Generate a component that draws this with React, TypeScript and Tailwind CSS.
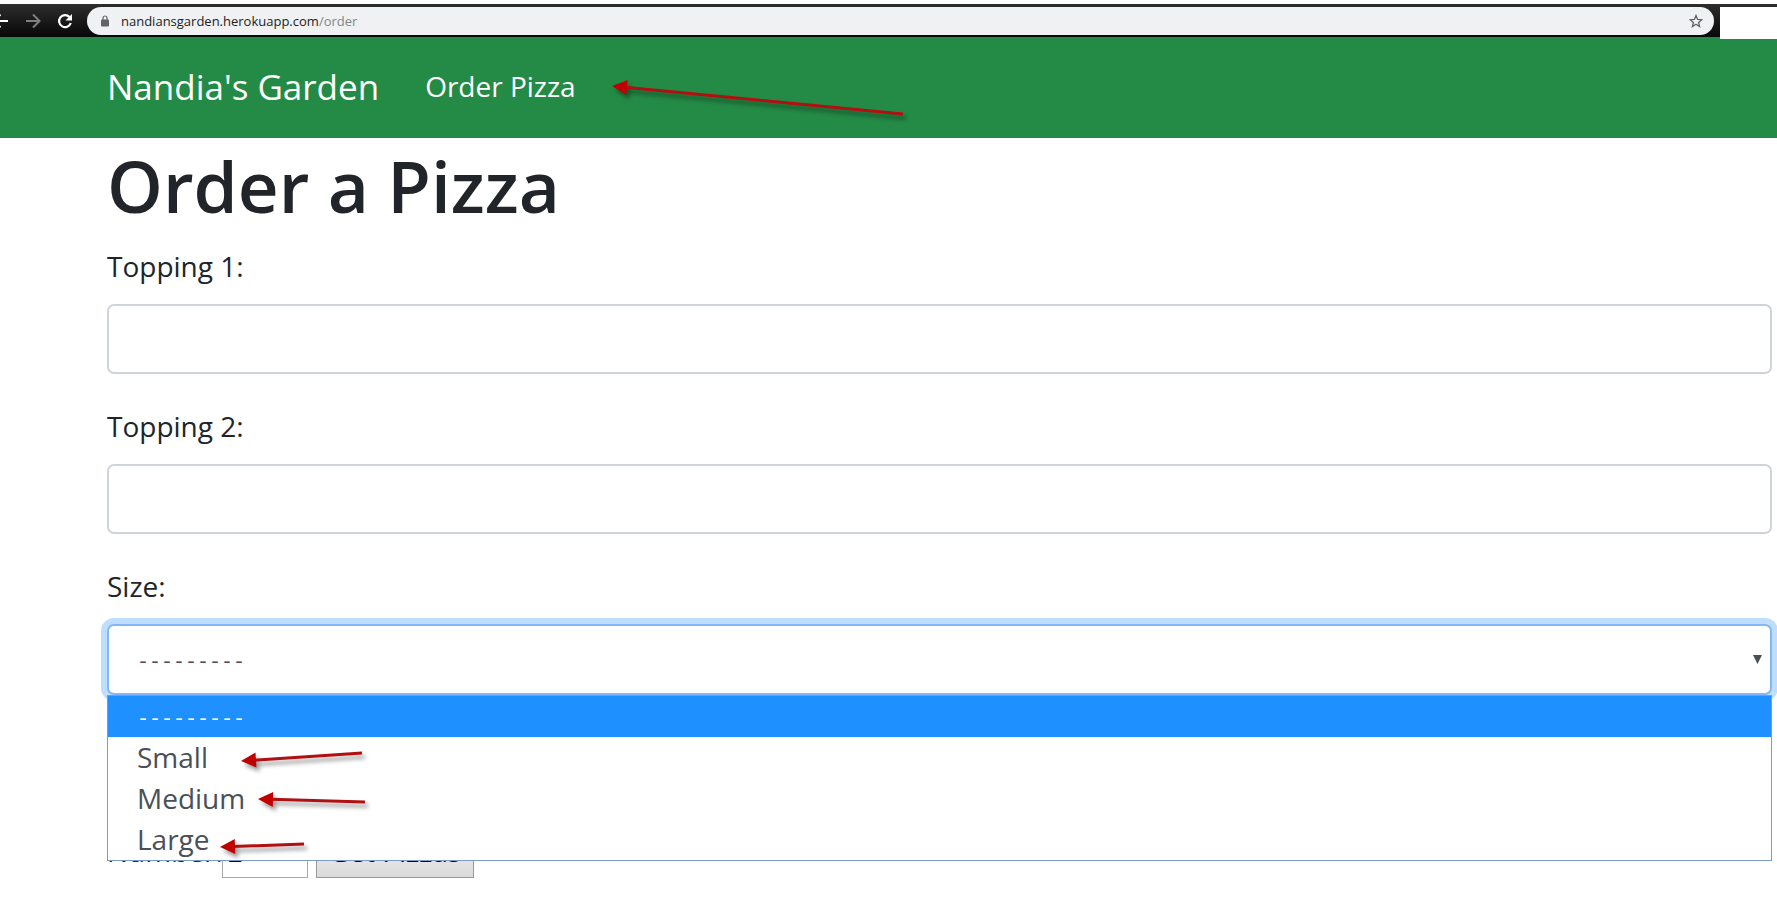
import React from "react";

type ArrowProps = { x1: number; y1: number; x2: number; y2: number };

function Arrow({ x1, y1, x2, y2 }: ArrowProps) {
  const angle = (Math.atan2(y2 - y1, x2 - x1) * 180) / Math.PI;
  const length = Math.hypot(x2 - x1, y2 - y1);
  return (
    <g transform={`translate(${x1} ${y1}) rotate(${angle})`}>
      <path d={`M13 0H${length}`} stroke="#b01010" strokeWidth="3" />
      <path d="M0 0L15 -7.5V7.5Z" fill="#c00000" />
    </g>
  );
}

function Annotations() {
  return (
    <svg
      className="pointer-events-none absolute top-0 left-0 z-20 h-[903px] w-[1000px] drop-shadow-[3px_4px_2px_rgba(0,0,0,0.4)]"
      viewBox="0 0 1000 903"
      aria-hidden="true"
    >
      <Arrow x1={612} y1={86} x2={903} y2={114} />
      <Arrow x1={241} y1={761} x2={362} y2={753} />
      <Arrow x1={258} y1={799} x2={365} y2={802} />
      <Arrow x1={220} y1={847} x2={304} y2={844} />
    </svg>
  );
}

function BrowserBar() {
  return (
    <div className="mt-1 flex h-[33px] bg-linear-to-b from-[#2e2e2e] to-[#080808]">
      <div className="flex min-w-0 flex-1 items-center pt-[3px] pr-[6px] pb-[2px]">
        <div className="flex w-[87px] shrink-0 items-center">
          <button aria-label="Back" className="-ml-2 w-4">
            <svg viewBox="0 0 16 16" className="h-4 w-4" fill="none" stroke="#fff" strokeWidth="2">
              <path d="M16 8H3M8.500 1.500L2 8l6.500 6.500" />
            </svg>
          </button>
          <button aria-label="Forward" className="ml-[17px] w-4">
            <svg viewBox="0 0 16 16" className="h-4 w-4" fill="none" stroke="#808080" strokeWidth="2">
              <path d="M1 8h13M8 1.500L14.500 8 8 14.500" />
            </svg>
          </button>
          <button aria-label="Reload" className="ml-4 w-4">
            <svg viewBox="0 0 16 16" className="h-4 w-4" fill="none" stroke="#fff" strokeWidth="2.200">
              <path d="M13.800 10A6 6 0 1 1 12.500 4" />
              <path d="M15 1v6.500H8.500Z" fill="#fff" stroke="none" />
            </svg>
          </button>
        </div>
        <div className="flex h-7 min-w-0 flex-1 items-center rounded-full bg-[#f0f1f3] pr-[11px] pl-[14px]">
          <svg viewBox="0 0 8 12" className="mr-3 h-3 w-2" aria-hidden="true">
            <rect y="4.500" width="8" height="7" rx="1" fill="#5f6368" />
            <path d="M2 5V3a2 2 0 0 1 4 0v2" fill="none" stroke="#5f6368" strokeWidth="1.200" />
          </svg>
          <span className="flex-1 text-[13px] leading-5 text-[#202124]">
            nandiansgarden.herokuapp.com<span className="text-[#80868b]">/order</span>
          </span>
          <button aria-label="Bookmark this page">
            <svg viewBox="0 0 14 14" className="h-[14px] w-[14px]" fill="none" stroke="#5f6368" strokeWidth="1.300">
              <path d="M7 1.500l1.600 3.900 4.200.3-3.200 2.700 1 4.100L7 10.300l-3.600 2.200 1-4.100L1.200 5.700l4.200-.3Z" />
            </svg>
          </button>
        </div>
      </div>
      <div className="mt-[3px] h-8 w-[57px] shrink-0 bg-white" />
    </div>
  );
}

function TextField({ id, label }: { id: string; label: string }) {
  return (
    <div className="mb-[30px]">
      <label htmlFor={id} className="mb-[15px] block text-[28px] leading-[45px]">
        {label}
      </label>
      <input
        id={id}
        type="text"
        className="block h-[70px] w-full rounded-[7px] border-2 border-[#ced4da] bg-white px-7 text-[28px] text-[#495057] outline-none"
      />
    </div>
  );
}

const placeholder = "---------";
const sizes = ["Small", "Medium", "Large"];

export default function App() {
  return (
    <div className="relative min-h-screen overflow-hidden bg-white font-['Open_Sans','Noto_Sans',sans-serif] text-[#212529]">
      <BrowserBar />
      <nav className="flex h-[101px] items-center bg-[#248b46] pb-[2px] pl-[107px] text-white">
        <a href="#home" className="mr-[46px] text-[35px] leading-[56px]">
          Nandia's Garden
        </a>
        <a href="#order" className="text-[28px] leading-[45px]">
          Order Pizza
        </a>
      </nav>
      <main className="pr-[5px] pl-[107px]">
        <h1 className="mb-[10px] text-[71px] leading-[96px] font-semibold">Order a Pizza</h1>
        <form>
          <TextField id="topping1" label="Topping 1:" />
          <TextField id="topping2" label="Topping 2:" />
          <div className="relative mb-[134px]">
            <label htmlFor="size" className="mb-[15px] block text-[28px] leading-[45px]">
              Size:
            </label>
            <div className="relative">
              <select
                id="size"
                className="block h-[71px] w-full appearance-none rounded-[7px] border-2 border-[#80b8f8] bg-white px-7 pt-[6px] font-['Liberation_Mono',monospace] text-[20px] text-[#495057] ring-6 ring-[#bfdeff] outline-none"
              >
                <option>{placeholder}</option>
                {sizes.map((s) => (
                  <option key={s}>{s}</option>
                ))}
              </select>
              <svg viewBox="0 0 9 9" className="absolute top-[31px] right-[10px] h-[9px] w-[9px]" aria-hidden="true">
                <path d="M0 0H9L4.500 9Z" fill="#495057" />
              </svg>
            </div>
            <ul
              role="listbox"
              aria-label="Size options"
              className="absolute top-full right-0 left-0 z-10 border border-[#7a9cc6] bg-white text-[28px] leading-[41px] text-[#495057]"
            >
              <li
                role="option"
                aria-selected="true"
                className="bg-[#1e90ff] px-[29px] pt-[6px] font-['Liberation_Mono',monospace] text-[20px] leading-[35px] text-white"
              >
                {placeholder}
              </li>
              {sizes.map((s) => (
                <li key={s} role="option" aria-selected="false" className="px-[29px]">
                  {s}
                </li>
              ))}
            </ul>
          </div>
          <div className="flex gap-2 text-[28px] leading-[45px]">
            <label htmlFor="number" className="w-[107px] whitespace-nowrap">
              Number:
            </label>
            <input
              id="number"
              type="text"
              defaultValue="1"
              className="h-[49px] w-[86px] border border-[#a9a9a9] bg-white px-1 pb-[2px] font-['Liberation_Sans',sans-serif] text-black"
            />
            <button
              type="button"
              className="h-[49px] w-[158px] border border-[#999] bg-linear-to-b from-[#f6f6f6] to-[#dadada] pb-[4px] leading-[43px] whitespace-nowrap text-black"
            >
              Get Pizzas
            </button>
          </div>
        </form>
      </main>
      <Annotations />
    </div>
  );
}
